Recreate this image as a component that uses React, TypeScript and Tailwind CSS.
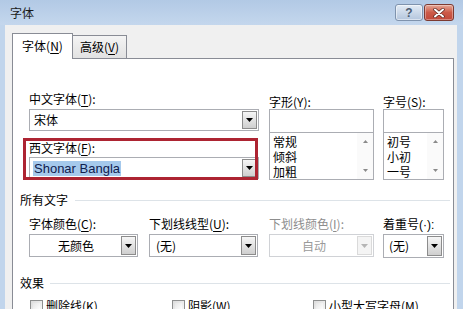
import React from "react";

const Arrow = ({ color = "#000" }: { color?: string }) => (
  <svg width="7" height="4" viewBox="0 0 7 4">
    <path d="M0 0h7L3.5 4z" fill={color} />
  </svg>
);

const SmallArrow = ({ up }: { up?: boolean }) => (
  <svg width="5" height="3" viewBox="0 0 5 3">
    <path d={up ? "M0 3h5L2.5 0z" : "M0 0h5L2.5 3z"} fill="#8a8a8a" />
  </svg>
);

function DropBtn({ disabled }: { disabled?: boolean }) {
  if (disabled) {
    return (
      <div className="w-[15px] h-full flex items-center justify-center border border-[#dadada] bg-[#f4f4f4]">
        <Arrow color="#b5b5b5" />
      </div>
    );
  }
  return (
    <div className="w-[15px] h-full flex items-center justify-center border border-[#8c8c8c] bg-gradient-to-b from-[#f6f6f6] to-[#cfcfcf]">
      <Arrow />
    </div>
  );
}

function U({ children }: { children: React.ReactNode }) {
  return <span className="underline underline-offset-[2px]">{children}</span>;
}

function Label({ children, gray }: { children: React.ReactNode; gray?: boolean }) {
  return (
    <div className={gray ? "h-[16px] leading-[16px] text-[12px] text-[#8d8d8d] whitespace-nowrap" : "h-[16px] leading-[16px] text-[12px] text-black whitespace-nowrap"}>
      {children}
    </div>
  );
}

function ListBox({ items }: { items: string[] }) {
  return (
    <div className="flex flex-col">
      <div className="h-[24px] border border-[#abadb3] bg-white" />
      <div className="h-[48px] -mt-[1px] border border-[#abadb3] bg-white flex overflow-hidden">
        <div className="flex-1 pl-[3px] pt-[1px] flex flex-col">
          {items.map((t) => (
            <div key={t} className="leading-[15px] h-[15px] text-[12px]">{t}</div>
          ))}
        </div>
        <div className="w-[16px] bg-[#fafafa] flex flex-col items-center justify-between py-[7px]">
          <SmallArrow up />
          <SmallArrow />
        </div>
      </div>
    </div>
  );
}

export default function App() {
  return (
    <div className="w-[463px] h-[309px] overflow-hidden flex flex-col bg-[#c1d5ec] text-black font-['Microsoft_YaHei','Noto_Sans_CJK_SC',sans-serif] text-[12px]">
      {/* title bar */}
      <div className="h-[25px] flex items-start pl-[10px] pr-[9px] bg-gradient-to-b from-[#b2c9e5] to-[#c4d7ed]">
        <span className="mt-[5px] leading-[16px] text-[12px] text-[#1a1a1a]">字体</span>
        <div className="ml-auto mt-[4px] flex gap-[1px]">
          <div className="w-[28px] h-[17px] rounded-[3px] border border-[#7f93ad] bg-gradient-to-b from-[#e3ebf5] to-[#b4c6dd] flex items-center justify-center shadow-[inset_0_0_0_1px_rgba(255,255,255,0.5)]">
            <span className="text-[12px] leading-[12px] font-bold text-[#4c5c72] font-['Liberation_Sans',sans-serif]">?</span>
          </div>
          <div className="w-[30px] h-[17px] rounded-[3px] border border-[#7c3a31] bg-gradient-to-b from-[#e4a696] via-[#cc5a48] to-[#c1483a] flex items-center justify-center shadow-[inset_0_0_0_1px_rgba(255,255,255,0.35)]">
            <svg width="12" height="10" viewBox="0 0 12 10">
              <path d="M2 1.5L10 8.5M10 1.5L2 8.5" stroke="#5a2620" strokeWidth="3.4" strokeLinecap="round" />
              <path d="M2 1.5L10 8.5M10 1.5L2 8.5" stroke="#ffffff" strokeWidth="2" strokeLinecap="round" />
            </svg>
          </div>
        </div>
      </div>

      {/* body */}
      <div className="flex-1 flex pl-[5px] pr-[8px] min-h-0">
        <div className="flex-1 bg-[#f0f0f0] pl-[7px] pr-[3px] pt-[8px] flex flex-col min-h-0">
          {/* tabs */}
          <div className="h-[25px] flex items-end">
            <div className="relative z-10 w-[61px] h-[26px] -mb-[1px] bg-white border border-b-0 border-[#898c95] flex items-center justify-center">
              <span className="leading-[16px] -mt-[1px]">字体(<U>N</U>)</span>
            </div>
            <div className="w-[54px] h-[23px] border border-l-0 border-b-0 border-[#898c95] bg-gradient-to-b from-[#f4f4f4] to-[#e2e2e2] flex items-center justify-center">
              <span className="leading-[16px]">高级(<U>V</U>)</span>
            </div>
          </div>

          {/* panel */}
          <div className="relative flex-1 border border-[#898c95] bg-white flex flex-col">
            {/* font selection */}
            <div className="mt-[32px] ml-[16px] flex items-start gap-[10px] h-[89px]">
              <div className="w-[230px] flex flex-col">
                <Label>中文字体(<U>T</U>):</Label>
                <div className="mt-[2px] h-[22px] border border-[#abadb3] bg-white flex p-[1px]">
                  <div className="flex-1 pl-[3px] leading-[18px] text-[12px]">宋体</div>
                  <DropBtn />
                </div>
                <div className="mt-[9px]">
                  <Label>西文字体(<U>F</U>):</Label>
                </div>
                <div className="mt-[1px] h-[22px] border border-[#abadb3] bg-white flex p-[1px]">
                  <div className="flex-1 pl-[2px] flex items-center">
                    <span className="bg-[#a5c9ec] text-[#10204e] px-[1px] leading-[15px] text-[13px] font-['Liberation_Sans',sans-serif]">Shonar Bangla</span>
                  </div>
                  <DropBtn />
                </div>
              </div>
              <div className="flex gap-[9px]">
                <div className="w-[105px] flex flex-col">
                  <div className="mt-[4px] h-[14px] leading-[14px] whitespace-nowrap">字形(<U>Y</U>):</div>
                  <ListBox items={["常规", "倾斜", "加粗"]} />
                </div>
                <div className="w-[61px] flex flex-col">
                  <div className="mt-[4px] h-[14px] leading-[14px] whitespace-nowrap">字号(<U>S</U>):</div>
                  <ListBox items={["初号", "小初", "一号"]} />
                </div>
              </div>
            </div>

            {/* red annotation */}
            <div className="absolute left-[10px] top-[79px] w-[235px] h-[42px] border-[3px] border-[#ad2432] pointer-events-none" />

            {/* 所有文字 */}
            <div className="mt-[12px] ml-[7px] mr-[3px] flex items-center gap-[7px]">
              <span className="leading-[16px]">所有文字</span>
              <div className="flex-1 h-px bg-[#dde3e8]" />
            </div>
            <div className="mt-[8px] ml-[16px] flex">
              <div className="w-[109px] flex flex-col">
                <Label>字体颜色(<U>C</U>):</Label>
                <div className="mt-[2px] h-[23px] border border-[#abadb3] bg-white flex p-[1px]">
                  <div className="flex-1 text-center leading-[19px]">无颜色</div>
                  <DropBtn />
                </div>
              </div>
              <div className="ml-[11px] w-[109px] flex flex-col">
                <Label>下划线线型(<U>U</U>):</Label>
                <div className="mt-[2px] h-[23px] border border-[#abadb3] bg-white flex p-[1px]">
                  <div className="flex-1 pl-[5px] leading-[19px]">(无)</div>
                  <DropBtn />
                </div>
              </div>
              <div className="ml-[11px] w-[105px] flex flex-col">
                <Label gray>下划线颜色(<U>I</U>):</Label>
                <div className="mt-[2px] h-[23px] border border-[#d0d2d6] bg-white flex p-[1px]">
                  <div className="flex-1 text-center leading-[19px] text-[#9a9a9a]">自动</div>
                  <DropBtn disabled />
                </div>
              </div>
              <div className="ml-[9px] w-[61px] flex flex-col">
                <Label>
                  着重号<span className="font-['Liberation_Sans',sans-serif]">(·):</span>
                </Label>
                <div className="mt-[2px] h-[24px] border border-[#abadb3] bg-white flex p-[1px]">
                  <div className="flex-1 pl-[4px] leading-[20px]">(无)</div>
                  <DropBtn />
                </div>
              </div>
            </div>

            {/* 效果 */}
            <div className="mt-[17px] ml-[7px] mr-[3px] flex items-center gap-[6px]">
              <span className="leading-[16px]">效果</span>
              <div className="flex-1 h-px bg-[#dde3e8]" />
            </div>
            <div className="mt-[7px] ml-[17px] flex">
              {[
                { t: "删除线(", k: "K", w: "w-[142px]" },
                { t: "阴影(", k: "W", w: "w-[141px]" },
                { t: "小型大写字母(", k: "M", w: "w-[140px]" },
              ].map((c) => (
                <div key={c.k} className={c.w + " flex items-center gap-[3px]"}>
                  <div className="w-[13px] h-[13px] border border-[#8e8f8f] bg-gradient-to-br from-[#dcdcdc] to-[#fafafa] p-[2px]">
                    <div className="w-full h-full bg-gradient-to-br from-[#e6e6e6] to-[#ffffff]" />
                  </div>
                  <span className="leading-[16px] whitespace-nowrap">
                    {c.t}
                    <U>{c.k}</U>)
                  </span>
                </div>
              ))}
            </div>
          </div>
        </div>
      </div>
    </div>
  );
}
